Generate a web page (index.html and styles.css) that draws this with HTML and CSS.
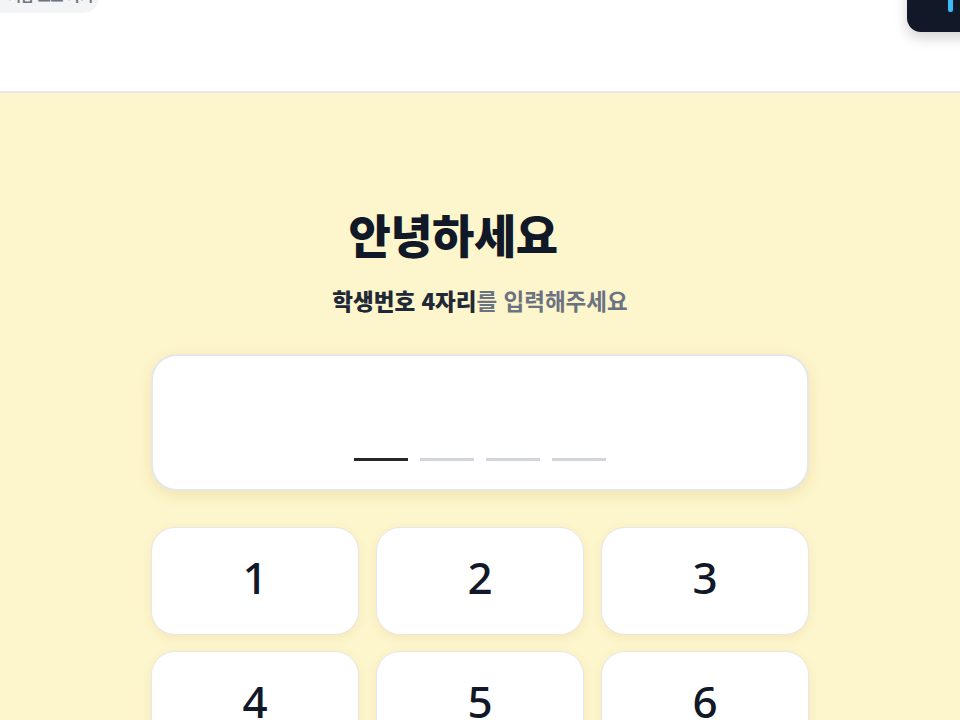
FILE: index.html
```html
<!DOCTYPE html>
<html lang="ko">
<head>
<meta charset="utf-8">
<title>학생번호 입력</title>
<link rel="stylesheet" href="styles.css">
</head>
<body>
<header class="topbar">
  <div class="pill">처음 으로 가기</div>
  <div class="spacer"></div>
  <div class="dark-btn"><span class="accent"></span></div>
</header>
<main class="stage">
  <h1 class="title">안녕하세요<span class="ghost"></span></h1>
  <p class="subtitle"><strong>학생번호 4자리</strong>를 입력해주세요</p>
  <div class="code-box">
    <div class="dashes">
      <span class="dash active"></span>
      <span class="dash"></span>
      <span class="dash"></span>
      <span class="dash"></span>
    </div>
  </div>
  <div class="keypad">
    <button class="key">1</button>
    <button class="key">2</button>
    <button class="key">3</button>
    <button class="key">4</button>
    <button class="key">5</button>
    <button class="key">6</button>
  </div>
</main>
</body>
</html>
```
FILE: styles.css
```css
html, body {
  margin: 0;
  padding: 0;
  height: 100%;
  overflow: hidden;
}
body {
  font-family: "Noto Sans CJK KR", "Noto Sans", sans-serif;
  background: #fdf5cc;
}
.topbar {
  height: 91px;
  background: #ffffff;
  border-bottom: 2px solid #e5e7eb;
  display: flex;
  align-items: flex-start;
  overflow: visible;
}
.pill {
  margin-top: -27px;
  margin-left: -20px;
  height: 40px;
  width: 119px;
  box-sizing: border-box;
  border-radius: 16px;
  background: #f3f4f6;
  color: #6b7280;
  font-size: 14px;
  line-height: 18px;
  padding-left: 28px;
  padding-top: 13px;
  white-space: nowrap;
  overflow: hidden;
  font-weight: 600;
}
.spacer { flex: 1; }
.dark-btn {
  margin-top: -24px;
  margin-right: -60px;
  width: 113px;
  height: 56px;
  border-radius: 14px;
  background: #111827;
  box-shadow: 0 6px 14px rgba(0, 0, 0, 0.18);
  display: flex;
  align-items: flex-start;
}
.accent {
  display: block;
  margin-top: 24px;
  margin-left: 41px;
  width: 5px;
  height: 12px;
  background: #38bdf8;
  border-radius: 0 0 2px 2px;
}
.stage {
  width: 658px;
  margin: 0 auto;
  padding-top: 110px;
}
.title {
  margin: 0;
  text-align: center;
  font-size: 46px;
  font-weight: 900;
  color: #111827;
  line-height: 60px;
  letter-spacing: -0.5px;
}
.ghost {
  display: inline-block;
  width: 54px;
}
.subtitle {
  margin: 22px 0 0;
  text-align: center;
  font-size: 22.5px;
  font-weight: 600;
  color: #6b7280;
  line-height: 30px;
}
.subtitle strong {
  color: #1f2937;
  font-weight: 800;
}
.code-box {
  margin-top: 39px;
  height: 137px;
  box-sizing: border-box;
  border: 2px solid #e5e7eb;
  border-radius: 26px;
  background: #ffffff;
  box-shadow: 0 4px 14px rgba(180, 150, 40, 0.18);
  display: flex;
  align-items: flex-end;
  justify-content: center;
  padding-bottom: 28px;
}
.dashes {
  display: flex;
  gap: 12px;
}
.dash {
  width: 54px;
  height: 3px;
  background: #d1d5db;
}
.dash.active {
  background: #27272a;
}
.keypad {
  margin-top: 36px;
  display: grid;
  grid-template-columns: repeat(3, 1fr);
  gap: 16px 17px;
}
.key {
  height: 108px;
  border: 1.5px solid #e5e7eb;
  border-radius: 24px;
  background: #ffffff;
  box-shadow: 0 3px 10px rgba(180, 150, 40, 0.12);
  font-family: "Noto Sans", "Noto Sans CJK KR", sans-serif;
  font-size: 44px;
  line-height: 44px;
  font-weight: 500;
  color: #111827;
  padding: 0 0 8px;
}
```
